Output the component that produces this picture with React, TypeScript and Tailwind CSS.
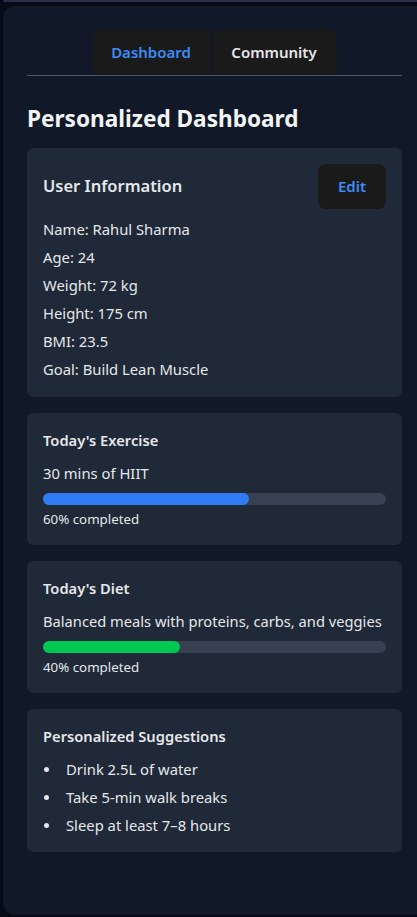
import React from "react";

const font = { fontFamily: '"Noto Sans", "Open Sans", sans-serif' };

const Progress = ({ pct, color }: { pct: number; color: string }) => (
  <div className="mt-2 h-3 w-full rounded-md bg-[#374151]">
    <div className={`h-3 rounded-md ${color}`} style={{ width: `${pct}%` }} />
  </div>
);

const App = () => {
  const info = [
    "Name: Rahul Sharma",
    "Age: 24",
    "Weight: 72 kg",
    "Height: 175 cm",
    "BMI: 23.5",
    "Goal: Build Lean Muscle",
  ];
  const tips = ["Drink 2.5L of water", "Take 5-min walk breaks", "Sleep at least 7–8 hours"];

  return (
    <main className="min-h-screen bg-[#070b18] overflow-hidden" style={font}>
      <div className="h-[2px] ml-[3px] bg-[#2a2f46] rounded-bl-md" />
      <div className="h-[4px]" />
      <div className="ml-[3px] h-[909px] rounded-l-xl bg-[#111827] pl-6 pr-[15px] pt-6 text-[#e5e7eb]">
        <div className="flex justify-center border-b border-[#4b5563]">
          <button className="h-[45px] w-[117px] rounded-t-lg bg-[#1a1a1a] text-[15px] font-semibold text-[#3b8cf6]">
            Dashboard
          </button>
          <button className="ml-[2px] h-[45px] w-[125px] rounded-t-lg bg-[#1a1a1a] text-[15px] font-semibold text-[#e5e7eb]">
            Community
          </button>
        </div>

        <h1 className="mt-[28px] text-[22.6px] font-bold text-[#f3f4f6] leading-[30px]">Personalized Dashboard</h1>

        <div className="mt-[14px] flex flex-col gap-4">
          <section className="rounded-md bg-[#1f2937] px-4 pt-4 pb-4">
            <div className="flex items-center justify-between">
              <h2 className="text-[16.5px] font-semibold">User Information</h2>
              <button className="h-[45px] w-[68px] rounded-lg bg-[#1a1a1a] text-[15px] font-semibold text-[#3b8cf6]">
                Edit
              </button>
            </div>
            <div className="mt-[8px] flex flex-col gap-1 text-[14.8px] leading-6">
              {info.map((l) => (
                <p key={l}>{l}</p>
              ))}
            </div>
          </section>

          <section className="rounded-md bg-[#1f2937] px-4 pt-[15px] pb-4">
            <h2 className="text-[14.7px] font-semibold leading-6">Today's Exercise</h2>
            <p className="mt-[9px] text-[14.8px] leading-6">30 mins of HIIT</p>
            <Progress pct={60} color="bg-[#2e7cf6]" />
            <p className="mt-[4px] text-[13.3px] leading-5">60% completed</p>
          </section>

          <section className="rounded-md bg-[#1f2937] px-4 pt-[15px] pb-4">
            <h2 className="text-[14.7px] font-semibold leading-6">Today's Diet</h2>
            <p className="mt-[9px] text-[14.7px] leading-6 whitespace-nowrap">Balanced meals with proteins, carbs, and veggies</p>
            <Progress pct={40} color="bg-[#00c853]" />
            <p className="mt-[4px] text-[13.3px] leading-5">40% completed</p>
          </section>

          <section className="rounded-md bg-[#1f2937] px-4 pt-[15px] pb-[15px]">
            <h2 className="text-[14.7px] font-semibold leading-6">Personalized Suggestions</h2>
            <ul className="mt-[9px] flex flex-col gap-1 text-[14.8px] leading-6">
              {tips.map((t) => (
                <li key={t} className="flex items-center">
                  <span className="ml-[1px] h-[5px] w-[5px] rounded-full bg-[#e5e7eb]" />
                  <span className="ml-[17px]">{t}</span>
                </li>
              ))}
            </ul>
          </section>
        </div>
      </div>
    </main>
  );
};

export default App;
